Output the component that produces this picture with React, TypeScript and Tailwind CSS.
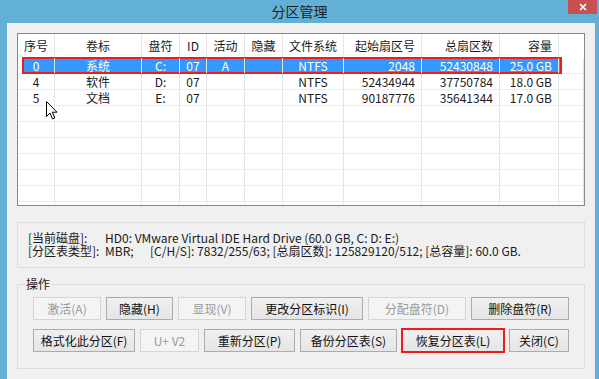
import React from 'react';

const FONT = "font-['Noto_Sans_CJK_SC','Microsoft_YaHei',sans-serif]";

const COLS = 'grid-cols-[37px_87px_38px_27px_38px_38px_61px_78px_78px_59px_1fr]';

interface Row {
  no: string;
  label: string;
  drive: string;
  id: string;
  active: string;
  hidden: string;
  fs: string;
  start: string;
  total: string;
  size: string;
}

const rows: Row[] = [
  { no: '0', label: '系统', drive: 'C:', id: '07', active: 'A', hidden: '', fs: 'NTFS', start: '2048', total: '52430848', size: '25.0 GB' },
  { no: '4', label: '软件', drive: 'D:', id: '07', active: '', hidden: '', fs: 'NTFS', start: '52434944', total: '37750784', size: '18.0 GB' },
  { no: '5', label: '文档', drive: 'E:', id: '07', active: '', hidden: '', fs: 'NTFS', start: '90187776', total: '35641344', size: '17.0 GB' },
];

const headers = ['序号', '卷标', '盘符', 'ID', '活动', '隐藏', '文件系统', '起始扇区号', '总扇区数', '容量', ''];

function Cell({ children, right }: { children?: React.ReactNode; right?: boolean }) {
  return (
    <div
      className={`border-r border-[#e6e6e6] px-[6px] truncate ${right ? 'text-right' : 'text-center'}`}
    >
      {children}
    </div>
  );
}

function Btn({ label, width, disabled, highlight }: { label: string; width: string; disabled?: boolean; highlight?: boolean }) {
  return (
    <div className={`relative ${width}`}>
      <button
        className={`w-full h-[23px] text-[12px] border ${
          disabled
            ? 'border-[#d5d5d5] bg-[#f4f4f4] text-[#9a9a9a]'
            : 'border-[#acacac] bg-gradient-to-b from-[#f0f0f0] to-[#e5e5e5] text-[#111]'
        }`}
      >
        {label}
      </button>
      {highlight && (
        <div className="absolute -inset-[1px] border-2 border-[#ee1c1c] pointer-events-none" />
      )}
    </div>
  );
}

export default function App() {
  const emptyRows = Array.from({ length: 7 });

  return (
    <div className={`w-[599px] h-[379px] bg-[#62b0d5] flex flex-col overflow-hidden ${FONT}`}>
      {/* Title bar */}
      <div className="relative h-[23px] flex items-center justify-center">
        <span className="text-[14px] text-[#1e1e1e] -mt-[1px]">分区管理</span>
        <div className="absolute right-[2px] top-0 w-[29px] h-[14px] bg-[#c75050] flex items-center justify-center">
          <svg width="8" height="8" viewBox="0 0 8 8">
            <path d="M1 1 L7 7 M7 1 L1 7" stroke="#fff" strokeWidth="1.6" />
          </svg>
        </div>
      </div>

      {/* Window body */}
      <div className="flex-1 ml-[7px] mr-[4px] bg-[#f0f0f0] px-[10px] pt-[10px] text-[12px] text-[#1a1a1a]">
        {/* Partition list */}
        <div className="relative h-[173px] border border-[#828790] bg-white overflow-hidden">
          <div className={`grid ${COLS} h-[24px] items-center leading-[24px]`}>
            {headers.map((h, i) => (
              <Cell key={i} right={i >= 7 && i <= 9}>{h}</Cell>
            ))}
          </div>
          {rows.map((r, idx) => (
            <div key={r.no} className={`relative grid ${COLS} h-[16px] leading-[16px] border-b border-[#ececec]`}>
              {idx === 0 && (
                <>
                  <div className="absolute left-[6px] top-0 bottom-0 w-[537px] bg-[#3399ff]" />
                  <div className="absolute left-[4px] -top-[1px] -bottom-[1px] w-[540px] border-2 border-[#ee1c1c]" />
                </>
              )}
              {[r.no, r.label, r.drive, r.id, r.active, r.hidden, r.fs, r.start, r.total, r.size, ''].map((v, i) => (
                <div
                  key={i}
                  className={`relative border-r border-[#e6e6e6] px-[6px] truncate ${
                    i >= 7 && i <= 9 ? 'text-right' : 'text-center'
                  } ${idx === 0 ? 'text-white' : ''}`}
                >
                  {v}
                </div>
              ))}
            </div>
          ))}
          {emptyRows.map((_, i) => (
            <div key={i} className={`grid ${COLS} h-[16px] border-b border-[#ececec]`}>
              {headers.map((_, j) => (
                <div key={j} className="border-r border-[#e6e6e6]" />
              ))}
            </div>
          ))}

          {/* mouse pointer */}
          <svg className="absolute left-[28px] top-[67px]" width="13" height="20" viewBox="0 0 13 20">
            <path
              d="M0.5 0.5 L0.5 15.5 L4 12 L6.5 18 L8.8 17 L6.3 11.2 L11 11.2 Z"
              fill="#fff"
              stroke="#000"
              strokeWidth="1"
              strokeLinejoin="round"
            />
          </svg>
        </div>

        {/* Disk info */}
        <div className="mt-[16px] h-[46px] border border-[#dcdcdc] pl-[10px] pt-[8px] leading-[13px] text-[#1a1a1a] whitespace-nowrap">
          <div className="flex">
            <span className="w-[77px]">[当前磁盘]:</span>
            <span>HD0: VMware Virtual IDE Hard Drive (60.0 GB, C: D: E:)</span>
          </div>
          <div className="flex">
            <span className="w-[77px]">[分区表类型]:</span>
            <span className="w-[45px]">MBR;</span>
            <span>[C/H/S]: 7832/255/63; [总扇区数]: 125829120/512; [总容量]: 60.0 GB.</span>
          </div>
        </div>

        {/* Operations */}
        <fieldset className="mt-[9px] h-[92px] border border-[#dcdcdc] px-[15px]">
          <legend className="ml-[-8px] px-[1px] leading-[14px]">操作</legend>
          <div className="flex flex-col gap-[9px] mt-[6px]">
            <div className="flex gap-[5px]">
              <Btn label="激活(A)" width="w-[68px]" disabled />
              <Btn label="隐藏(H)" width="w-[67px]" />
              <Btn label="显现(V)" width="w-[68px]" disabled />
              <Btn label="更改分区标识(I)" width="w-[112px]" />
              <Btn label="分配盘符(D)" width="w-[98px]" disabled />
              <Btn label="删除盘符(R)" width="w-[98px]" />
            </div>
            <div className="flex gap-[5px]">
              <Btn label="格式化此分区(F)" width="w-[102px]" />
              <Btn label="U+ V2" width="w-[59px]" disabled />
              <Btn label="重新分区(P)" width="w-[91px]" />
              <Btn label="备份分区表(S)" width="w-[97px]" />
              <Btn label="恢复分区表(L)" width="w-[102px]" highlight />
              <Btn label="关闭(C)" width="w-[60px]" />
            </div>
          </div>
        </fieldset>
      </div>
    </div>
  );
}
